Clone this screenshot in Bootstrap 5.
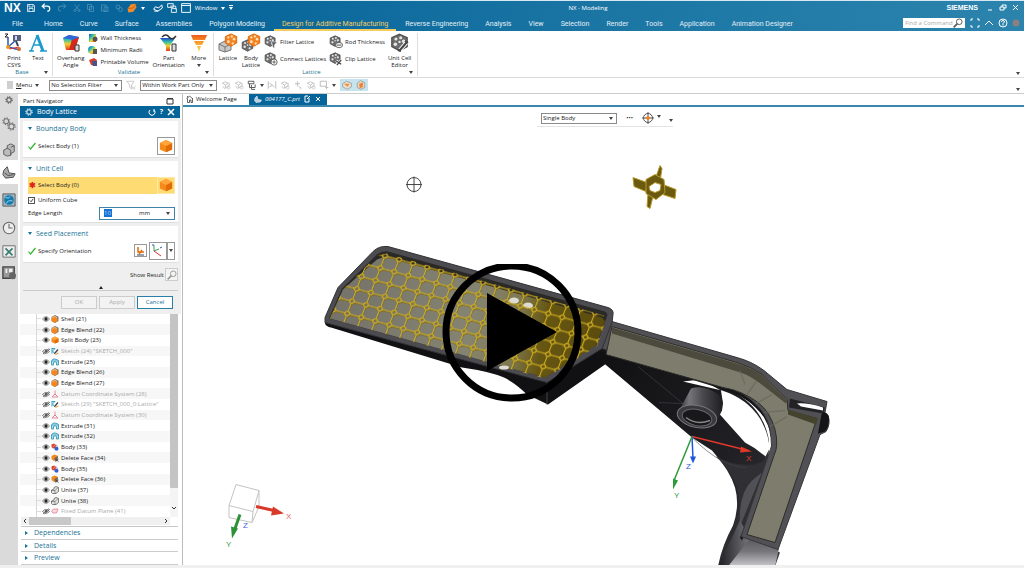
<!DOCTYPE html>
<html lang="en">
<head>
<meta charset="utf-8">
<meta name="viewport" content="width=device-width, initial-scale=1">
<title>NX - Modeling</title>
<link href="https://cdn.jsdelivr.net/npm/bootstrap@5.3.0/dist/css/bootstrap.min.css" rel="stylesheet">
<style>
:root{--nx:#05649a;--link:#1a7396}
body{font-family:"Open Sans","Noto Sans",sans-serif;font-size:6px;line-height:8px;color:#222;background:#f2f2f2}
a{color:inherit;text-decoration:none}
button,select,input{font:inherit;color:inherit;border:0;background:none;padding:0;border-radius:0;margin:0}
svg{display:block;flex:none}
.s8{width:8px;height:8px}.s10{width:10px;height:10px}.s12{width:12px;height:12px}.s14{width:14px;height:14px}.s20{width:20px;height:20px}
.top{background:linear-gradient(90deg,#04639a 0%,#0a679b 25%,#1b76a4 60%,#2c84ad 100%);color:#fff;border-top:1px solid #d6e8f2;height:31px}
.titlebar{height:14px;font-size:6px}
.quick{gap:6px;margin-left:6px}
.logo-nx{font:bold 12px/14px "Liberation Sans",sans-serif}
.siemens{font:bold 7px/12px "Liberation Sans",sans-serif}
.appname{left:50%;width:152px;text-align:center}
.dim{opacity:.3}
.tabs{height:16px;gap:1px;font-family:Roboto,sans-serif;font-size:7px;line-height:14px;color:#e2eff6}
.tabs a{padding:1px 8px 0;height:15px;white-space:nowrap}
.tabs a.on{color:#f5cd5f;border-bottom:2px solid #f5cd5f}
.find{width:62px;height:10px;background:#fff;color:#999}
.find input{width:50px;font-family:"Open Sans",sans-serif;font-size:6px;padding-left:2px}
.find input::placeholder{color:#aaa;opacity:1}
.ribbon{height:47px;background:#fff;border-bottom:1px solid #dcdcdc}
.grp{border-right:1px solid #ddd;margin:2px 0 1px;position:relative}
.grp-name{color:var(--link);text-align:center;line-height:7px}
.big{display:flex;flex-direction:column;align-items:center;line-height:7px;text-align:center;gap:2px}
.sm-btn{display:flex;align-items:center;gap:2px;white-space:nowrap}
.stack3{height:34px}
.stack2{height:35px}
.tri{width:0;height:0;border:2px solid transparent;border-top:3px solid #444;border-bottom:0;display:inline-block;flex:none}
.tri-r{width:0;height:0;border:2px solid transparent;border-left:3px solid var(--link);border-right:0;display:inline-block}
.tri-u{width:0;height:0;border:2px solid transparent;border-bottom:3px solid #222;border-top:0;display:block}
.corner{position:absolute;right:4px;bottom:2px}
.selbar{height:16px;background:#fff;border-bottom:1px solid #ccc}
.pick{position:relative;display:flex;align-items:center;border:1px solid #8a8a8a;background:#fff;height:11px}
.pick select{appearance:none;width:100%;padding-left:1px;line-height:9px}
.pick .tri{position:absolute;right:3px}
.rail{width:18px;background:#dadada}
.rail button{display:flex;align-items:center;justify-content:center;width:100%;height:24px}
.rail .on{background:#fff}
.rail .rl-s{height:13px}.rail .rl-22{height:22px}.rail .rl-32{height:32px}.rail .rl-19{height:19px}.rail .rl-34{height:34px}
.side{width:165px;background:#fff;border-right:1px solid #bbb}
.side-title{height:12px;padding:2px 8px 0 5px}
.dlg-title{height:12px;background:var(--nx);color:#fff;font-size:7px;line-height:12px;margin:0 2px;padding:0 5px}
.dlg{background:#efefef;margin:0 1px 0 2px;padding:3px 3px 0}
.sec{background:#fff;margin-bottom:3px;padding:3px 3px 0 5px;border-bottom:1px solid #e0e0e0}
.sec h2{font-size:7px;line-height:9px;font-weight:400;color:var(--link);margin:0 0 4px;display:flex;align-items:center;gap:4px}
.sec h2 .tri{border-top-color:var(--link)}
.checkrow{gap:2px}
.bodybtn{border:1px solid #999;width:18px;height:18px;display:flex;align-items:center;justify-content:center;background:#fff}
.bodybtn.small-b{width:13px;height:13px}
.bodybtn.drop{width:8px}
.pickrow{background:#ffdc73;height:17px}
.pickrow .bodybtn{border-color:#ffe9a8;background:#ffdc73;height:17px}
.star{color:#d22;font-size:8px}
.chk{appearance:none;width:7px;height:7px;border:1px solid #555;background:#fff;flex:none}
.chk:checked{background:#fff url("data:image/svg+xml,%3Csvg xmlns='http://www.w3.org/2000/svg' viewBox='0 0 6 6'%3E%3Cpath d='M1 3l1.500 1.500L5 1' fill='none' stroke='%23222'/%3E%3C/svg%3E")}
.len{width:76px;height:13px;border:1px solid #3f83a8;background:#fff}
.len input{width:8px;height:8px;background:#1573d4;color:#bcd9f5}
.act{width:36px;height:13px;border:1px solid #ccc;color:#aaa;background:#f3f3f3}
.act.go{border-color:#2a7fa8;color:#1a6f98;background:#fff}
.result{height:18px;gap:1px}
.result .bodybtn{border-color:#ccc;background:#f4f4f4;color:#999}
.fold-up{height:7px;padding-top:2px;border-bottom:1px solid #ccc}
.acts{gap:2px;padding:5px 5px 5px 0}
.tree{height:203px;display:flex;flex-direction:column;overflow:hidden;list-style:none;margin:0 0 0 2px;padding:0}
.tree li{flex:1 1 0;display:flex;align-items:center;padding-left:16px;gap:1px;white-space:nowrap}
.tree li:nth-child(even){background:#f7f7f7}
.tree li::before{content:"";align-self:stretch;width:5px;border-left:1px solid #d8d8d8;background:linear-gradient(#ddd,#ddd) 0 50%/5px 1px no-repeat}
.tree li span{padding-left:1px}
.tree .off{color:#aaa}
.vbar{width:8px;background:#f4f4f4}
.vbar i{display:block;width:8px;height:174px;background:#c4c4c4}
.hbar{height:8px;background:#f0f0f0;margin:0 12px 0 3px}
.hbar i{width:42px;height:8px;background:#c8c8c8}
.rule{height:2px;background:#c6c6c6;margin:1px 4px 0 3px}
.fold{height:13px;margin:0 4px 0 3px;padding-left:4px;border-bottom:1px solid #ccc;color:var(--link);font-size:7px;display:flex;align-items:center;gap:6px}
.doc-tabs{height:13px;border-bottom:2px solid #3b87ae;background:#fff}
.doc-tabs .home-tab{gap:2px;padding:0 12px 0 3px}
.doc-tabs .on{background:var(--nx);color:#fff;padding:0 5px;gap:3px}
.scene-wrap{background:#fff;min-height:0}
.scene{position:absolute;inset:0;width:100%;height:100%}
.float-bar{position:absolute;left:354px;top:4px;height:16px;width:136px;border-bottom:1px solid #e4e4e4;gap:9px}
.play{position:absolute;left:50%;top:264px;transform:translateX(-50%)}
.foot{height:3px;background:#f0f0f0}
</style>
</head>
<body class="vh-100 d-flex flex-column overflow-hidden">
<svg width="0" height="0" class="position-absolute" aria-hidden="true">
<defs>
<linearGradient id="heat" x1="0" y1="0" x2="1" y2="1"><stop offset="0" stop-color="#2348c8"/><stop offset=".35" stop-color="#2ec0b0"/><stop offset=".6" stop-color="#f2e030"/><stop offset="1" stop-color="#d81e10"/></linearGradient>
<linearGradient id="rainbow" x1="0" y1="0" x2="0" y2="1"><stop offset="0" stop-color="#2348c8"/><stop offset=".3" stop-color="#2ec0b0"/><stop offset=".6" stop-color="#f2d030"/><stop offset="1" stop-color="#e03a10"/></linearGradient>
<linearGradient id="funnelg" x1="0" y1="0" x2="0" y2="1"><stop offset="0" stop-color="#ef5a1c"/><stop offset=".5" stop-color="#f9a52c"/><stop offset="1" stop-color="#ffe27a"/></linearGradient>
</defs>
<symbol id="cube" viewBox="0 0 16 16"><path d="M8 1l7 3.500v7.500L8 15 1 12V4.500z" fill="#f58a1a"/><path d="M8 8l7-3.500V12l-7 3z" fill="#e06c08"/><path d="M8 1l7 3.500L8 8 1 4.500z" fill="#ffa53a"/></symbol>
<symbol id="cell" viewBox="0 0 16 16"><path d="M8 1l6.500 3v7.500L8 15l-6.500-3.500V4z" fill="#6c6c6c" stroke="#4c4c4c"/><g fill="#e6e6e6"><circle cx="5" cy="5" r="1.300"/><circle cx="9" cy="4" r="1.300"/><circle cx="4.500" cy="9.500" r="1.500"/><circle cx="11.500" cy="7" r="1.500"/><circle cx="10.500" cy="11.500" r="1.300"/><circle cx="8" cy="7.500" r="1"/></g></symbol>
<symbol id="ocell" viewBox="0 0 16 16"><path d="M8 1l6.500 3v7.500L8 15l-6.500-3.500V4z" fill="#f58220" stroke="#d8640a"/><g fill="#ffe0b8"><circle cx="5" cy="5" r="1.300"/><circle cx="9" cy="4" r="1.300"/><circle cx="5" cy="10" r="1.600"/><circle cx="11.500" cy="7" r="1.500"/><circle cx="10" cy="12" r="1.300"/></g></symbol>
<symbol id="gear" viewBox="0 0 16 16"><circle cx="8" cy="8" r="4.500" fill="none" stroke="currentColor" stroke-width="2"/><circle cx="8" cy="8" r="6.500" fill="none" stroke="currentColor" stroke-width="2" stroke-dasharray="2.500 2.600"/></symbol>
<symbol id="eye" viewBox="0 0 16 12"><path d="M1 6q7-9 14 0q-7 9-14 0z" fill="#fff" stroke="#444" stroke-width="1.400"/><circle cx="8" cy="6" r="3.400" fill="#222"/></symbol>
<symbol id="eyeoff" viewBox="0 0 16 12"><path d="M1 7q7-8 14 0q-7 7-14 0zM2 12L14 1M5 12L16 2" fill="none" stroke="#555" stroke-width="1.500"/><circle cx="8" cy="6.500" r="2.500" fill="#555"/></symbol>
<symbol id="blend" viewBox="0 0 16 16"><path d="M8 0l7 3.500v8.500L8 16 1 12V4z" fill="#777"/><circle cx="7" cy="9" r="6" fill="#f5861d"/><path d="M3 5q4-4 9 0" stroke="#ffc27a" fill="none" stroke-width="2"/></symbol>
<symbol id="sketch" viewBox="0 0 16 16"><path d="M1 3h7l-5 5 5 6M2 3v10" fill="none" stroke="#1b9cc4" stroke-width="1.800"/><path d="M7 11l6-7 2 2-6 7-3 1z" fill="#444"/><path d="M9 15l6-3" stroke="#e39a1d" stroke-width="2"/></symbol>
<symbol id="extrude" viewBox="0 0 16 16"><path d="M1 6q2-5 7-4t7 3v9h-4V9q-3-3-6 0v5H1z" fill="#aee0ee" stroke="#1c89ac" stroke-width="1.500"/><path d="M1 6h14" stroke="#1c89ac"/></symbol>
<symbol id="csys" viewBox="0 0 16 16"><path d="M8 1v7l-6 6h12L8 8M5 11l3-3 3 3" fill="none" stroke="#dd6f86" stroke-width="1.500"/></symbol>
<symbol id="bodyi" viewBox="0 0 16 16"><path d="M1 3l5-2 4 3-1 6-5 1-3-3z" fill="#d9412b"/><path d="M7 9l5-2 3 3-1 5H9l-2-2z" fill="#2f5fd0"/><path d="M10 3l3 4" stroke="#333"/><path d="M4 8l4-5" stroke="#ffd0c8"/></symbol>
<symbol id="delface" viewBox="0 0 16 16"><path d="M7 1l7 3-2 8-6 2-5-4V4z" fill="#f08a1d"/><path d="M7 8l7-4-1 8-5 2z" fill="#666"/><path d="M9 10l6 5M15 10l-6 5" stroke="#333" stroke-width="1.500"/></symbol>
<symbol id="unite" viewBox="0 0 16 16"><path d="M1 8l5-2V3l4-2 5 2v8l-5 4H3l-2-2z" fill="#e2e2e2" stroke="#444" stroke-width="1.300"/><path d="M1 9h7l6-6M8 9v6" fill="none" stroke="#444"/></symbol>
<symbol id="plane" viewBox="0 0 16 16"><path d="M1 8l4-4h9l-3 8H4z" fill="#fbd9df" stroke="#dd6f86" stroke-width="1.400"/></symbol>
<symbol id="check" viewBox="0 0 16 16"><path d="M1 9l4 5L15 2" fill="none" stroke="#2db52d" stroke-width="2.400"/></symbol>
<symbol id="funnel" viewBox="0 0 16 16"><path d="M1 2h12L9 8v6l-3-2V8zM9 10l6 5M15 10l-5 5" fill="none" stroke="currentColor" stroke-width="1.200"/></symbol>
<symbol id="grips" viewBox="0 0 16 16"><path d="M2 5l5-2 5 2-5 3zM7 8v5l6-3V5M3 10l3 4" fill="none" stroke="currentColor" stroke-width="1.300"/><circle cx="12" cy="12" r="2.500" fill="none" stroke="currentColor"/></symbol>
<symbol id="glass" viewBox="0 0 16 16"><circle cx="10" cy="6" r="4.500" fill="none" stroke="currentColor" stroke-width="1.500"/><path d="M7 9l-6 6" stroke="currentColor" stroke-width="2.500"/></symbol>
</svg>

<header class="top">
 <div class="titlebar d-flex align-items-center position-relative">
  <span class="logo-nx ms-1">NX</span>
  <div class="quick d-flex align-items-center">
   <svg class="s8" viewBox="0 0 16 16" fill="none" stroke="#fff" stroke-width="1.500"><path d="M1 1h12l2 2v12H1zM4 1v5h8V1M4 15v-6h8v6"/></svg>
   <svg class="s10" viewBox="0 0 16 16" fill="none" stroke="#fff" stroke-width="2"><path d="M6 1L2 5l4 4M2 5h8q4 0 4 4t-4 4"/></svg>
   <svg class="s10 dim" viewBox="0 0 16 16" fill="none" stroke="#fff" stroke-width="1.500"><path d="M10 1l4 4-4 4M14 5H6q-4 0-4 4t4 4"/></svg>
   <svg class="s8 dim" viewBox="0 0 16 16" fill="none" stroke="#fff" stroke-width="1.500"><path d="M3 1l8 10M13 1L5 11"/><circle cx="4" cy="13" r="2"/><circle cx="12" cy="13" r="2"/></svg>
   <svg class="s8 dim" viewBox="0 0 16 16" fill="none" stroke="#fff" stroke-width="1.500"><path d="M1 1h8v10H1zM5 5h8v10H5z"/></svg>
   <svg class="s8 dim" viewBox="0 0 16 16" fill="none" stroke="#fff" stroke-width="1.500"><path d="M1 2h9v12H1zM6 6h8v9H6z"/></svg>
   <svg class="s8 dim" viewBox="0 0 16 16" fill="none" stroke="#fff" stroke-width="1.500"><circle cx="6" cy="6" r="4"/><circle cx="11" cy="11" r="4"/></svg>
  </div>
  <svg class="s10 ms-1" viewBox="0 0 16 16"><path d="M1 9l5-7 8-1 1 6-5 7-8 1z" fill="#f08a2a"/><path d="M1 9l9-1 5-7" stroke="#b9520a" fill="none"/></svg>
  <svg class="ms-1" width="4" height="3" viewBox="0 0 4 3"><path d="M0 0h4L2 3z" fill="#fff"/></svg>
  <svg class="s10 ms-2" viewBox="0 0 16 16" fill="none" stroke="#fff" stroke-width="1.600"><path d="M1 10l3-4 5 2 5-5 1 5-7 5zM2 13h6"/></svg>
  <svg class="s10 ms-1" viewBox="0 0 16 16" fill="none" stroke="#fff" stroke-width="1.400"><path d="M1 1h9v6H1zM5 5h9v5M7 9h8v6H7z"/></svg>
  <svg class="s10 ms-1" viewBox="0 0 16 16" fill="none" stroke="#fff" stroke-width="1.500"><path d="M1 1h14v14H1zM1 4h14"/></svg>
  <button class="text-white ms-1">Window</button>
  <svg class="ms-1" width="4" height="3" viewBox="0 0 4 3"><path d="M0 0h4L2 3z" fill="#fff"/></svg>
  <svg class="ms-1" width="4" height="6" viewBox="0 0 4 6"><path d="M0 0h4v1H0zM0 2h4L2 5z" fill="#fff"/></svg>
  <span class="appname position-absolute">NX - Modeling</span>
  <span class="siemens ms-auto">SIEMENS</span>
  <div class="d-flex align-items-center ms-2 me-1" style="gap:5px">
   <svg class="s8" viewBox="0 0 8 8"><path d="M2 6h4" stroke="#fff"/></svg>
   <svg class="s8" viewBox="0 0 8 8" fill="none" stroke="#fff"><path d="M3 3V1h4v3H5M1 3h4v3H1z"/></svg>
   <svg class="s8" viewBox="0 0 8 8" stroke="#fff"><path d="M1 1l5 5M6 1L1 6"/></svg>
  </div>
 </div>
 <nav class="tabs d-flex align-items-center" aria-label="Ribbon tabs">
  <a href="#" class="ms-1 me-1">File</a><a href="#">Home</a><a href="#">Curve</a><a href="#">Surface</a><a href="#">Assemblies</a><a href="#">Polygon Modeling</a><a href="#" class="on">Design for Additive Manufacturing</a><a href="#">Reverse Engineering</a><a href="#">Analysis</a><a href="#">View</a><a href="#">Selection</a><a href="#">Render</a><a href="#">Tools</a><a href="#">Application</a><a href="#">Animation Designer</a>
  <div class="find d-flex align-items-center ms-auto"><input placeholder="Find a Command" aria-label="Find a Command"><svg class="s10" style="color:#555"><use href="#glass"/></svg></div>
  <div class="d-flex align-items-center mx-1" style="gap:4px">
   <svg class="s10" viewBox="0 0 10 10" fill="none" stroke="#fff"><path d="M1 3V1h2M7 1h2v2M9 7v2H7M3 9H1V7"/></svg>
   <svg class="s10" viewBox="0 0 10 10" fill="none" stroke="#fff"><path d="M1 7l4-4 4 4"/></svg>
   <svg class="s10" viewBox="0 0 10 10" fill="none" stroke="#fff"><circle cx="5" cy="5" r="4"/><path d="M3.500 4q0-1.500 1.500-1.500T6.500 4L5 5.500V7.500"/></svg>
   <svg class="s8" viewBox="0 0 8 8"><circle cx="4" cy="4" r="3.500" fill="#8c7f7f"/></svg>
  </div>
 </nav>
</header>

<section class="ribbon d-flex position-relative" aria-label="Ribbon">
 <div class="grp d-flex flex-column justify-content-between" style="width:53px">
  <div class="d-flex ps-1 gap-1">
   <button class="big"><svg class="s20" viewBox="0 0 20 20"><path d="M4 14V4M4 14l12 3M4 14l7-6" stroke="#2c56b8" stroke-width="1.500" fill="none"/><path d="M9 2h8v6H9z" fill="#56607a"/><path d="M11 3h2v4h-2z" fill="#cdd6ee"/><path d="M12 8l2 5" stroke="#345" stroke-width="2"/><path d="M5 16l10-2" stroke="#d33"/><circle cx="4" cy="14" r="2" fill="#e39a1d"/><circle cx="15" cy="16" r="2" fill="#e06c28"/><path d="M1 1h3L1 4h3" stroke="#222" fill="none"/></svg>Print<br>CSYS</button>
   <button class="big"><svg class="s20" viewBox="0 0 20 20"><path d="M3 18L9 3M5 12h8M1 18h5M12 18h7" fill="none" stroke="#1b9ad0" stroke-width="1.500"/><path d="M9 2l6 16" stroke="#1b9ad0" stroke-width="3"/></svg>Text</button>
  </div>
  <div class="grp-name pe-2">Base</div><i class="tri corner"></i>
 </div>
 <div class="grp d-flex flex-column justify-content-between" style="width:161px">
  <div class="d-flex ps-1 gap-1">
   <button class="big"><svg class="s20" viewBox="0 0 20 20"><path d="M2 5l6-3 10 2-4 13-9 0z" fill="url(#rainbow)"/><path d="M11 6l7-2-4 13-6 0z" fill="#d8281c"/><path d="M2 5l6-3 10 2-6 3z" fill="#3068d8"/><path d="M14 12h4v6h-4z" fill="#ddd" stroke="#333"/></svg>Overhang<br>Angle</button>
   <div class="stack3 d-flex flex-column justify-content-between">
    <button class="sm-btn"><svg class="s10" viewBox="0 0 10 10"><path d="M1 1h7v8H1z" fill="url(#heat)"/><circle cx="7" cy="6" r="2.500" fill="#555"/></svg>Wall Thickness</button>
    <button class="sm-btn"><svg class="s10" viewBox="0 0 10 10"><circle cx="4" cy="5" r="4" fill="url(#heat)"/><path d="M5 4h4v5H5z" fill="#555"/></svg>Minimum Radii</button>
    <button class="sm-btn"><svg class="s10" viewBox="0 0 10 10"><path d="M1 3l5-2 3 2-2 6-4-1z" fill="#d3402e"/><path d="M4 4h5v5H5z" fill="#44548a"/></svg>Printable Volume</button>
   </div>
   <button class="big"><svg class="s20" viewBox="0 0 20 20"><path d="M1 5h15l-5 8v5H7v-5z" fill="url(#rainbow)"/><path d="M3 4q4-4 7 0t7-1" fill="none" stroke="#333" stroke-width="1.500"/><path d="M13 11h4v7h-4z" fill="#ddd" stroke="#333"/></svg>Part<br>Orientation</button>
   <button class="big"><svg class="s20" viewBox="0 0 20 20"><path d="M2 2h16l-2 5H4zM5 8h10l-2 4H7zM8 13h4l-2 6z" fill="url(#funnelg)"/></svg>More<i class="tri"></i></button>
  </div>
  <div class="grp-name pe-2">Validate</div><i class="tri corner"></i>
 </div>
 <div class="grp d-flex flex-column justify-content-between" style="width:204px">
  <div class="d-flex ps-1" style="gap:3px">
   <button class="big"><svg class="s20" viewBox="0 0 20 20"><path d="M1 11l6-3 6 3v6l-6 2-6-2z" fill="#c8c8c8" stroke="#777"/><path d="M1 11l6 3 6-3M7 14v5" fill="none" stroke="#777"/><use href="#ocell" x="6" y="0" width="14" height="14"/></svg>Lattice</button>
   <button class="big"><svg class="s20" viewBox="0 0 20 20"><use href="#cell" x="0" y="6" width="13" height="13"/><use href="#ocell" x="6" y="0" width="14" height="14"/></svg>Body<br>Lattice</button>
   <div class="stack2 d-flex flex-column justify-content-around">
    <button class="sm-btn"><svg class="s14" viewBox="0 0 16 16"><use href="#cell" width="14" height="14"/><path d="M8 8h7l-3 3v4l-2-1v-3z" fill="#555" stroke="#fff" stroke-width=".6"/></svg>Filter Lattice</button>
    <button class="sm-btn"><svg class="s14" viewBox="0 0 16 16"><use href="#cell" width="14" height="14"/><circle cx="11.500" cy="11.500" r="3.500" fill="#fff" stroke="#555"/><path d="M9.500 11.500h4M11.500 9.500v4" stroke="#555"/></svg>Connect Lattices</button>
   </div>
   <div class="stack2 d-flex flex-column justify-content-around">
    <button class="sm-btn"><svg class="s14" viewBox="0 0 16 16"><use href="#cell" width="14" height="14"/><ellipse cx="11.500" cy="11.500" rx="4" ry="3" fill="#fff" stroke="#555"/><path d="M9 11.500h5" stroke="#333"/></svg>Rod Thickness</button>
    <button class="sm-btn"><svg class="s14" viewBox="0 0 16 16"><use href="#cell" width="14" height="14"/><path d="M8 10l6 4M14 9l-5 6" stroke="#fff" stroke-width="3"/><path d="M8 10l6 4M14 9l-5 6" stroke="#444" stroke-width="1.500"/></svg>Clip Lattice</button>
   </div>
   <button class="big"><svg class="s20" viewBox="0 0 20 20"><use href="#cell" width="19" height="19"/><path d="M10 17l7-8" stroke="#fff" stroke-width="4"/><path d="M10 17l7-8M8 17l3 1M15 8l3 2" stroke="#444" stroke-width="2"/></svg>Unit Cell<br>Editor</button>
  </div>
  <div class="grp-name pe-2">Lattice</div><i class="tri corner"></i>
 </div>
 <i class="tri corner"></i>
</section>

<section class="selbar d-flex align-items-center position-relative" aria-label="Selection bar">
 <svg class="s8" style="margin:0 2px 0 6px" viewBox="0 0 8 8" fill="none" stroke="#777"><path d="M1 1h6M1 3h6M1 5h6M1 7h6" stroke-width=".7"/></svg>
 <button><u>M</u>enu</button><i class="tri" style="margin:0 10px 0 3px"></i>
 <div class="pick" style="width:73px"><select aria-label="Selection filter"><option>No Selection Filter</option></select><i class="tri"></i></div>
 <svg class="s10" style="margin:0 4px;color:#bbb"><use href="#funnel"/></svg>
 <div class="pick" style="width:77px"><select aria-label="Scope"><option>Within Work Part Only</option></select><i class="tri"></i></div>
 <div class="d-flex align-items-center ms-1" style="gap:3px;color:#bbb">
  <svg class="s10"><use href="#grips"/></svg><svg class="s10"><use href="#grips"/></svg><svg class="s10" style="color:#555" viewBox="0 0 16 16" fill="none" stroke="#555" stroke-width="1.500"><path d="M2 2h9v4H2zM4 6v6h9V7M7 8v7h6"/></svg><i class="tri"></i>
  <svg class="s10" viewBox="0 0 16 16" fill="none" stroke="#bbb" stroke-width="1.500"><path d="M2 2v12M14 2v12M4 5l8 6M4 11l4-2"/></svg><svg class="s10"><use href="#grips"/></svg>
  <svg class="s10" viewBox="0 0 16 16" fill="none" stroke="#bbb" stroke-width="1.500"><path d="M3 6h8M7 2v8M9 10l4 3-2 2"/></svg><svg class="s10"><use href="#grips"/></svg>
  <svg class="s10" viewBox="0 0 16 16" fill="none" stroke="#bbb" stroke-width="1.500"><path d="M2 2h10v8H2zM10 12h5M12 10v5"/></svg><i class="tri"></i>
 </div>
 <div class="d-flex ms-1" style="background:#c6e4ef;gap:4px;padding:1px 2px"><svg class="s10" viewBox="0 0 16 16"><path d="M1 6l6-4 8 3v6l-6 4-8-4z" fill="#e6e0d4" stroke="#8a8a80"/><path d="M3 6h9l-3 5z" fill="#f09030"/></svg><svg class="s10" viewBox="0 0 16 16"><path d="M2 5l5-4 7 3v8l-6 3-6-3z" fill="#e6d8c8" stroke="#8a8a80"/><path d="M5 6l6-2v7l-5 2z" fill="#ee8230"/></svg></div>
 <i class="tri corner"></i>
</section>

<main class="d-flex flex-grow-1" style="min-height:0">
 <nav class="rail flex-shrink-0" aria-label="Resource bar">
  <button class="rl-s" style="color:#444" aria-label="Settings"><svg class="s8"><use href="#gear"/></svg></button>
  <button class="rl-34" style="color:#777" aria-label="Assembly navigator"><svg class="s14" viewBox="0 0 20 20"><use href="#gear" width="12" height="12"/><use href="#gear" x="7" y="7" width="13" height="13"/></svg></button>
  <button class="rl-19" aria-label="Constraint navigator"><svg class="s14" viewBox="0 0 16 16"><path d="M2 8l4-2V3l4-2 4 2v7l-4 2v2l-4 1-4-2z" fill="#bbb" stroke="#555"/><path d="M6 6l4 2v6M10 5l4-2" stroke="#555" fill="none"/></svg></button>
  <button class="on" aria-label="Part navigator"><svg class="s14" viewBox="0 0 16 16"><path d="M2 6l4-4 2 7 7 1-2 4-9 1-3-4z" fill="#aaa" stroke="#444"/><path d="M3 9l4 3 6-1" stroke="#444" fill="none"/></svg></button>
  <button class="rl-32" aria-label="Web browser"><svg class="s14" viewBox="0 0 16 16"><path d="M1 1h14v14H1z" fill="#9fb4c0" stroke="#555"/><circle cx="8" cy="8" r="5.500" fill="#1479ad"/><path d="M4 5q4 2 5-1M5 12q1-4 7-3" stroke="#a6e0f0" fill="none"/></svg></button>
  <button aria-label="History"><svg class="s14" viewBox="0 0 16 16" fill="none" stroke="#666" stroke-width="1.200"><circle cx="8" cy="8" r="6.500" fill="#eee"/><path d="M8 3v5h4"/></svg></button>
  <button class="rl-22" aria-label="Process studio"><svg class="s14" viewBox="0 0 16 16"><path d="M1 2h14v13H1z" fill="#eee" stroke="#666"/><path d="M4 5l8 8M12 5l-8 8" stroke="#3b7d70" stroke-width="2"/></svg></button>
  <button class="rl-22" aria-label="Roles"><svg class="s14" viewBox="0 0 16 16"><path d="M1 1h13v13H1z" fill="#999" stroke="#444" stroke-width="1.500"/><path d="M4 3h2v5H4zM8 3h4v4H8z" fill="#eee"/><circle cx="12" cy="11" r="4" fill="#666"/></svg></button>
 </nav>

 <aside class="side flex-shrink-0 d-flex flex-column">
  <div class="side-title d-flex align-items-center justify-content-between">Part Navigator<svg class="s8" viewBox="0 0 8 8"><path d="M1 2h6v5H1zM1 1.500h6" fill="none" stroke="#333"/></svg></div>
  <div class="dlg-title d-flex align-items-center"><svg class="s8 me-1"><use href="#gear"/></svg>Body Lattice<svg class="s8 ms-auto" viewBox="0 0 8 8" fill="none" stroke="#fff"><path d="M2 2a3 3 0 1 0 4 0M6 4V1"/></svg><b class="mx-1">?</b><svg class="s8" viewBox="0 0 8 8" stroke="#fff" stroke-width="1.500"><path d="M1 1l6 6M7 1L1 7"/></svg></div>
  <form class="dlg">
   <div class="sec" style="height:37px"><h2><i class="tri"></i>Boundary Body</h2>
    <div class="checkrow d-flex align-items-center"><svg class="s8"><use href="#check"/></svg>Select Body (1)<button type="button" class="bodybtn ms-auto" aria-label="Pick boundary body"><svg class="s14"><use href="#cube"/></svg></button></div></div>
   <div class="sec" style="height:62px"><h2><i class="tri"></i>Unit Cell</h2>
    <div class="pickrow d-flex align-items-center"><b class="star" style="margin:0 2px 0 1px">✱</b>Select Body (0)<button type="button" class="bodybtn ms-auto" aria-label="Pick unit cell body"><svg class="s14"><use href="#cube"/></svg></button></div>
    <label class="d-flex align-items-center" style="height:13px;gap:3px"><input type="checkbox" class="chk" checked>Uniform Cube</label>
    <div class="d-flex align-items-center justify-content-between"><label for="edge">Edge Length</label><div class="len d-flex align-items-center px-1"><input id="edge" value="10"><span class="ms-auto me-3">mm</span><i class="tri"></i></div></div></div>
   <div class="sec" style="height:37px"><h2><i class="tri"></i>Seed Placement</h2>
    <div class="checkrow d-flex align-items-center"><svg class="s8"><use href="#check"/></svg>Specify Orientation
     <button type="button" class="bodybtn small-b ms-auto" aria-label="Orientation dialog"><svg class="s10" viewBox="0 0 10 10"><path d="M2 1v5h6M3 8l3-4" stroke="#e06c08" fill="none" stroke-width="1.500"/><path d="M1 9h7" stroke="#345"/></svg></button>
     <div class="d-flex"><button type="button" class="bodybtn" aria-label="Coordinate system"><svg class="s14" viewBox="0 0 14 14" fill="none"><path d="M3 7V1M3 7l5-2" stroke="#3a9d57"/><path d="M3 7l7 5" stroke="#d33"/><path d="M1 1h2M9 4l2-1" stroke="#2c56b8"/></svg></button><button type="button" class="bodybtn drop" aria-label="More orientations"><i class="tri"></i></button></div></div></div>
   <div class="result d-flex align-items-center justify-content-end">Show Result<button type="button" class="bodybtn small-b" aria-label="Show result"><svg class="s10"><use href="#glass"/></svg></button></div>
   <div class="fold-up d-flex justify-content-center"><i class="tri-u"></i></div>
   <div class="acts d-flex justify-content-end"><button type="button" class="act">OK</button><button type="button" class="act">Apply</button><button type="button" class="act go">Cancel</button></div>
  </form>
  <div class="d-flex"><ul class="tree flex-grow-1">
   <li><svg class="s8"><use href="#eye"/></svg><svg class="s8"><use href="#blend"/></svg><span>Shell (21)</span></li>
   <li><svg class="s8"><use href="#eye"/></svg><svg class="s8"><use href="#blend"/></svg><span>Edge Blend (22)</span></li>
   <li><svg class="s8"><use href="#eye"/></svg><svg class="s8"><use href="#cube"/></svg><span>Split Body (23)</span></li>
   <li class="off"><svg class="s8"><use href="#eyeoff"/></svg><svg class="s8"><use href="#sketch"/></svg><span>Sketch (24) "SKETCH_000"</span></li>
   <li><svg class="s8"><use href="#eye"/></svg><svg class="s8"><use href="#extrude"/></svg><span>Extrude (25)</span></li>
   <li><svg class="s8"><use href="#eye"/></svg><svg class="s8"><use href="#blend"/></svg><span>Edge Blend (26)</span></li>
   <li><svg class="s8"><use href="#eye"/></svg><svg class="s8"><use href="#blend"/></svg><span>Edge Blend (27)</span></li>
   <li class="off"><svg class="s8"><use href="#eyeoff"/></svg><svg class="s8"><use href="#csys"/></svg><span>Datum Coordinate System (28)</span></li>
   <li class="off"><svg class="s8"><use href="#eyeoff"/></svg><svg class="s8"><use href="#sketch"/></svg><span>Sketch (29) "SKETCH_000_0:Lattice"</span></li>
   <li class="off"><svg class="s8"><use href="#eyeoff"/></svg><svg class="s8"><use href="#csys"/></svg><span>Datum Coordinate System (30)</span></li>
   <li><svg class="s8"><use href="#eye"/></svg><svg class="s8"><use href="#extrude"/></svg><span>Extrude (31)</span></li>
   <li><svg class="s8"><use href="#eye"/></svg><svg class="s8"><use href="#extrude"/></svg><span>Extrude (32)</span></li>
   <li><svg class="s8"><use href="#eye"/></svg><svg class="s8"><use href="#bodyi"/></svg><span>Body (33)</span></li>
   <li><svg class="s8"><use href="#eye"/></svg><svg class="s8"><use href="#delface"/></svg><span>Delete Face (34)</span></li>
   <li><svg class="s8"><use href="#eye"/></svg><svg class="s8"><use href="#bodyi"/></svg><span>Body (35)</span></li>
   <li><svg class="s8"><use href="#eye"/></svg><svg class="s8"><use href="#delface"/></svg><span>Delete Face (36)</span></li>
   <li><svg class="s8"><use href="#eye"/></svg><svg class="s8"><use href="#unite"/></svg><span>Unite (37)</span></li>
   <li><svg class="s8"><use href="#eye"/></svg><svg class="s8"><use href="#unite"/></svg><span>Unite (38)</span></li>
   <li class="off"><svg class="s8"><use href="#eyeoff"/></svg><svg class="s8"><use href="#plane"/></svg><span>Fixed Datum Plane (41)</span></li>
  </ul>
  <div class="vbar d-flex flex-column justify-content-between me-1"><i></i><svg class="s8 mb-1" viewBox="0 0 8 8" fill="none" stroke="#333"><path d="M2 2l2 2 2-2"/></svg></div></div>
  <div class="hbar d-flex align-items-center justify-content-between"><svg class="s8" viewBox="0 0 8 8" fill="none" stroke="#333"><path d="M5 2L3 4l2 2"/></svg><i class="me-auto"></i><svg class="s8" viewBox="0 0 8 8" fill="none" stroke="#333"><path d="M3 2l2 2-2 2"/></svg></div>
  <div class="rule"></div>
  <a href="#" class="fold"><i class="tri-r"></i>Dependencies</a>
  <a href="#" class="fold"><i class="tri-r"></i>Details</a>
  <a href="#" class="fold"><i class="tri-r"></i>Preview</a>
 </aside>

 <section class="flex-grow-1 d-flex flex-column" style="min-width:0">
  <nav class="doc-tabs d-flex flex-shrink-0" aria-label="Documents">
   <a href="#" class="home-tab d-flex align-items-center"><svg class="s8" viewBox="0 0 16 16" fill="none" stroke="#333" stroke-width="1.500"><path d="M1 8l6-6 7 6M3 7v8h4v-5h3v5h3V7M3 2v3"/></svg>Welcome Page</a>
   <a href="#" class="on d-flex align-items-center"><svg class="s8" viewBox="0 0 16 16"><path d="M2 6l4-4 2 7 7 1-2 4-9 1-3-4z" fill="#bcd" stroke="#fff"/></svg><i>004177_C.prt</i><svg class="s8" viewBox="0 0 8 8" fill="none" stroke="#fff"><path d="M5 1H2v6h4V3M4 4l3-3"/></svg><svg class="s8" viewBox="0 0 8 8" stroke="#fff"><path d="M2 2l4 4M6 2L2 6"/></svg></a>
  </nav>
  <div class="scene-wrap flex-grow-1 position-relative">
   <svg class="scene" viewBox="183 106 841 459" preserveAspectRatio="xMidYMid slice" role="img" aria-label="Bracket part with lattice">
    <defs>
     <pattern id="lat" width="14" height="14" patternUnits="userSpaceOnUse" patternTransform="matrix(1 .27 -.34 .88 394.400 250.900)">
      <g fill="none" stroke="#7d6912" stroke-width="1.100" transform="translate(.5 .900)"><path d="M7 4L10 7 7 10 4 7zM7 0v4M7 10V14M0 7h4M10 7H14"/></g>
      <g fill="none" stroke="#d6b422" stroke-width=".9"><path d="M7 4L10 7 7 10 4 7zM7 0v4M7 10V14M0 7h4M10 7H14"/><circle cx="7" cy="7" r="2.400"/></g>
     </pattern>
     <linearGradient id="floor" gradientUnits="userSpaceOnUse" x1="330" y1="300" x2="610" y2="350"><stop offset="0" stop-color="#74726a"/><stop offset=".5" stop-color="#858471"/><stop offset=".66" stop-color="#7f7950"/><stop offset=".76" stop-color="#665612"/><stop offset="1" stop-color="#594a0c"/></linearGradient>
     <linearGradient id="cyl"><stop offset="0" stop-color="#2a2a2e"/><stop offset=".25" stop-color="#77777b"/><stop offset=".55" stop-color="#4a4a4e"/><stop offset="1" stop-color="#1e1e20"/></linearGradient>
     <linearGradient id="brace" x1="0" y1="0" x2="1" y2="1"><stop offset="0" stop-color="#101012"/><stop offset=".6" stop-color="#202024"/><stop offset="1" stop-color="#3a3a3e"/></linearGradient>
     <linearGradient id="leg"><stop offset="0" stop-color="#1d1d20"/><stop offset=".5" stop-color="#4a4a4e"/><stop offset="1" stop-color="#77777b"/></linearGradient>
     <linearGradient id="endcap" x1="0" y1="0" x2="0" y2="1"><stop offset="0" stop-color="#555559"/><stop offset=".5" stop-color="#77777b"/><stop offset="1" stop-color="#c9c9cf"/></linearGradient>
    </defs>
    <!-- lower brace and leg -->
    <path d="M600 350L680 374 720 386Q762 400 769 440L768 460 742 535 780 552 775 566H718Q722 545 733 525Q740 505 735 487Q730 470 712 450L692 437 603 362z" fill="url(#brace)"/>
    <path d="M683 381l39 9q25 8 38 28 8 14 9 25v16q-12-11-24-17l-26-29 4-10-2-13-20-11z" fill="#fff"/>
    <path d="M716 456q18 10 38 8l9-3 6-12-3 36-24 51-8-7q9-22 3-42-6-17-21-31z" fill="#303034"/>
    <path d="M752 480q-14 14-12 46l22-54z" fill="#68686c" opacity=".6"/>
    <path d="M740 536q-14 16-22 30h57l4-18z" fill="url(#endcap)"/>
    <path d="M740 520l-22 46h10l22-28z" fill="url(#leg)"/>
    <path d="M638 366l45 37-24-1M692 437q30 30 55 30" fill="none" stroke="#44444a" stroke-width=".6"/>
    <!-- boss -->
    <path d="M691 388q12-4 26 5 8 6 5 17l-8 16-36-14z" fill="url(#cyl)"/>
    <ellipse cx="697" cy="416" rx="20" ry="11" fill="#3a3a3e" stroke="#77777b" transform="rotate(12 697 416)"/>
    <ellipse cx="697" cy="417" rx="15" ry="8" fill="#18181a" stroke="#66666a" transform="rotate(12 697 417)"/>
    <path d="M686 417q10 8 24 3" fill="none" stroke="#888" stroke-width="1.500"/>
    <!-- tray side walls -->
    <path d="M325 318v5q1 3 6 4l131 40q28 4 42 10 12 6 23 17l21 10 57-40 3-16-6-6-55 38z" fill="#111113"/>
    <path d="M547 383v21" stroke="#444"/>
    <!-- arm frame -->
    <path d="M603 345l-3 6 124 38q26 8 40 28 8 14 8 28l-2 26-30 66 2 3 33-77-1-30q-4-30-30-45l-20-10z" fill="#151517"/>
    <path d="M612 321l125 36q15 4 27 13l23 19 40 12-2 11 3 3q3 8-2 16l-6 3-42 115-37-13 28-83q4-7 2-16-2-20-12-30-14-16-36-22l-121-37z" fill="#515155" stroke="#37373a"/>
    <path d="M822 411q6 1 7 6 0 10-4 14l-7 2z" fill="#151517"/>
    <path d="M612 326l125 36q14 4 25 12l25 25 1 11 29 8-42 124-28-8 27-79q5-10 1-26-5-18-17-27-16-12-35-15l-117-33z" fill="#7e7d6d" stroke="#2d2d2c"/>
    <path d="M612 327l125 36q14 4 25 12l25 25-1 3-27-21q-12-9-25-12l-122-37z" fill="#4b4a3c"/>
    <path d="M788 409l30 9-2 6-28-10z" fill="#45432d"/>
    <path d="M740 370l5 14M757 380l-10 14M772 394l-16 9M785 410l-22 2M787 416l-17 10" stroke="#66655a" stroke-width="1.500" opacity=".6"/>
    <path d="M790 398l35 9-2 6-34-6z" fill="#232326"/><path d="M797 403q10-1 26 4v3l-22-4z" fill="#fff"/>
    <!-- tray -->
    <path d="M325 322v-5l13-30 35-36q6-6 15-5l220 61q6 2 5 7l-1 8-10 26-55 34z" fill="#4c4c50" stroke="#333336"/>
    <path d="M329 318l13-30 35-34q5-4 11-3l217 60q3 1 2 5l-10 28-52 33z" fill="#2b2926"/>
    <path d="M330 318l13-29 34-30 8-3 217 61 3 4-9 24-51 32z" fill="url(#floor)"/>
    <ellipse cx="514" cy="300" rx="5" ry="3" fill="#dcdcd2"/><ellipse cx="528" cy="305" rx="5" ry="3" fill="#dcdcd2"/><ellipse cx="504" cy="367" rx="5" ry="2" fill="#dcdcd2"/>
    <path d="M330 318l13-29 34-34 10-2 217 62 2 4-9 27-52 32z" fill="url(#lat)"/>
    <!-- unit cell -->
    <g fill="#6a5a10" stroke="#b8982a" stroke-width="1" stroke-linejoin="round">
     <path d="M633 177l14 5-1 9-12-5zM660 165l2 3-2 13-5-2zM663 184l13 5-1 9-12-4zM648 193l5 3-3 12-3-2z"/>
     <path d="M646 179l9-5 9 5 1 13-9 7-10-6z"/><path d="M649 186l6-4 6 2-1 6-5 2-5-2z" fill="#fff"/>
    </g>
    <!-- cursor -->
    <g fill="none" stroke="#444" stroke-width="1"><circle cx="414" cy="184" r="7"/><path d="M414 176v16M406 184h16"/></g>
    <!-- part axes -->
    <g font-family="Liberation Sans, sans-serif" font-size="8">
     <path d="M692 436l56 14" stroke="#e0382a" stroke-width="1.500"/><path d="M741 446l11 5-12 1z" fill="#e0382a"/><text x="746" y="460" fill="#e0382a">X</text>
     <path d="M692 436l1 22" stroke="#1f57dd" stroke-width="1.500"/><path d="M690 456h6l-3 7z" fill="#1f57dd"/><text x="686" y="468" fill="#1f57dd">Z</text>
     <path d="M692 436l-18 44" stroke="#2f9a3a" stroke-width="1.500"/><path d="M673 478l5 2-5 9z" fill="#2f9a3a"/><text x="674" y="497" fill="#2f9a3a">Y</text>
     <!-- view triad -->
     <path d="M236 484l23 6-6 21-24-6zM259 490v16l-7 16-23-5v-12M253 511l-1 11" fill="none" stroke="#c4c4c4"/>
     <path d="M256 506l18 4" stroke="#d8392b" stroke-width="3"/><path d="M273 506l11 7-13 2z" fill="#d8392b"/><text x="286" y="518" fill="#e0665a">X</text>
     <path d="M240 514l-5 14" stroke="#2c9138" stroke-width="3"/><path d="M231 526l7 2-6 10z" fill="#2c9138"/><text x="226" y="546" fill="#3d9c49">Y</text>
     <text x="243" y="527" fill="#3f62e8">Z</text>
    </g>
   </svg>
   <div class="float-bar d-flex align-items-center ps-1"><div class="pick" style="width:77px"><select aria-label="Body rule"><option>Single Body</option></select><i class="tri"></i></div><span>•••</span>
    <svg class="s12" viewBox="0 0 12 12" fill="none" stroke="#555"><circle cx="6" cy="6" r="4.500"/><path d="M6 0v12M0 6h12"/><circle cx="6" cy="6" r="1.500" fill="#f08020" stroke="#f08020"/></svg><div class="d-flex" style="margin-left:-6px;gap:8px"><i class="tri"></i><i class="tri mt-1"></i></div></div>
  </div>
 </section>
</main>
<footer class="foot"></footer>
<button class="play" aria-label="Play video"><svg width="140" height="138" viewBox="0 0 140 138"><circle cx="70" cy="68" r="66" fill="none" stroke="#000" stroke-width="7"/><path d="M45 29l70 39-70 39z"/></svg></button>
<script src="https://cdn.jsdelivr.net/npm/bootstrap@5.3.0/dist/js/bootstrap.bundle.min.js"></script>
</body>
</html>
